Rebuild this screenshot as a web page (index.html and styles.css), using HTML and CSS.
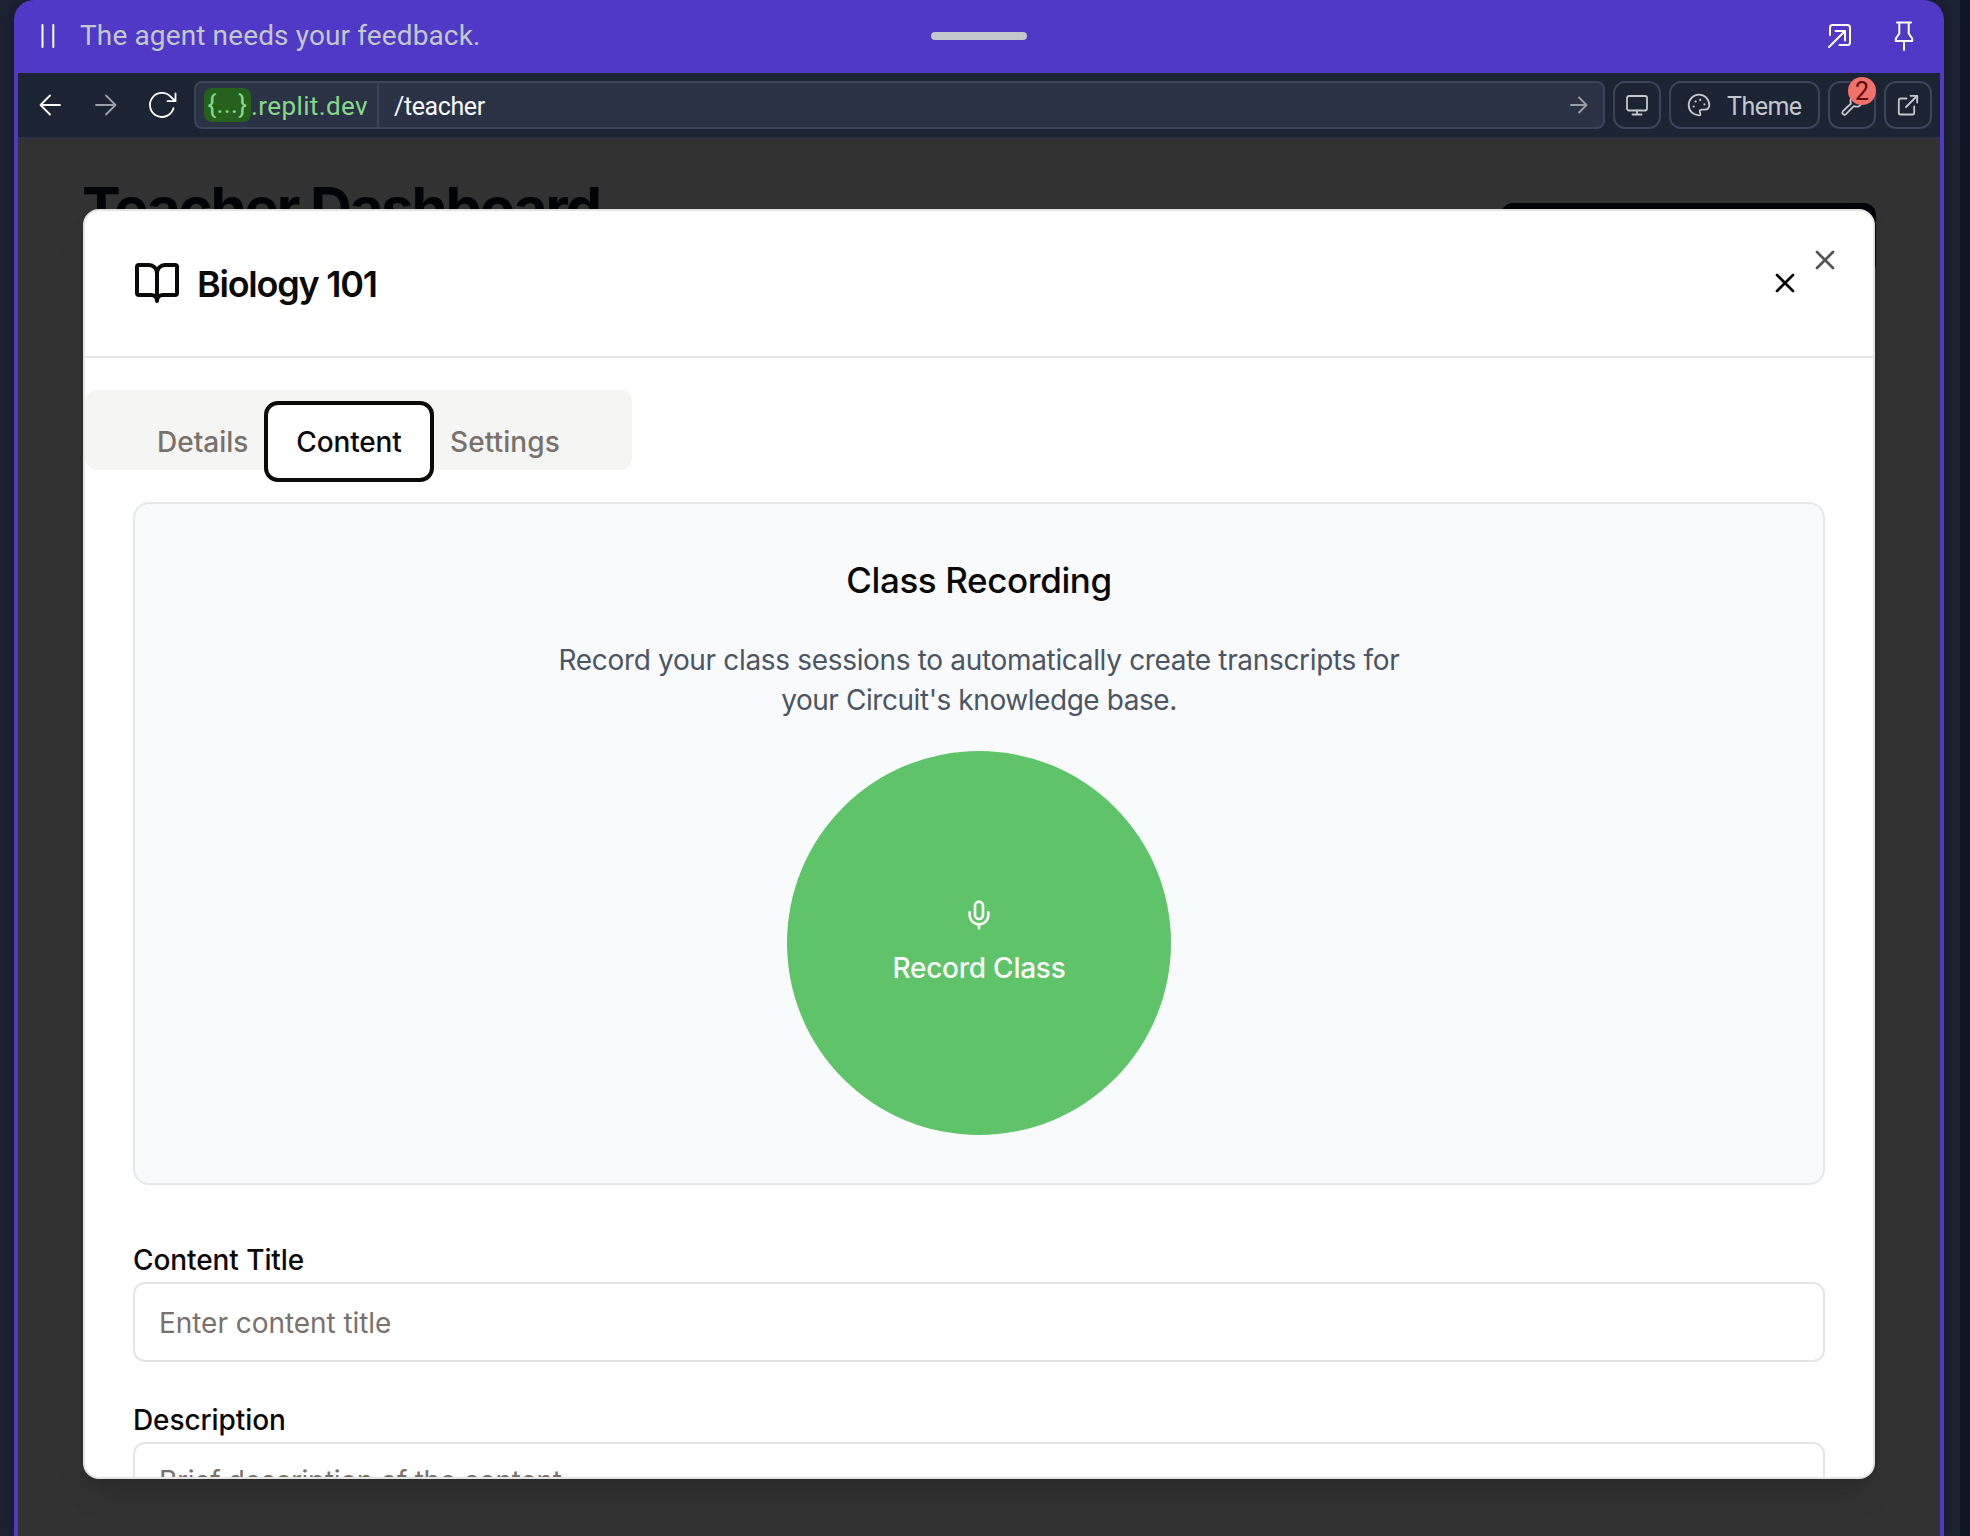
FILE: index.html
```html
<!DOCTYPE html>
<html lang="en">
<head>
<meta charset="utf-8">
<title>Teacher Dashboard</title>
<link rel="stylesheet" href="styles.css">
</head>
<body>
<div class="workspace">
  <div class="window">
    <header class="agent-bar">
      <svg class="pause" width="16" height="26" viewBox="0 0 16 26"><path d="M2.5 2v22M13.3 2v22"/></svg>
      <span class="agent-text">The agent needs your feedback.</span>
      <span class="grabber"></span>
      <div class="agent-actions">
        <svg width="28" height="32" viewBox="0 0 28 32"><path d="M4 15V7.5Q4 5 6.500 5H21.500Q24 5 24 7.500V22.500Q24 25 21.500 25H13.500M3 27L18.500 11.500M9.500 11H19V20.500"/></svg>
        <svg width="28" height="32" viewBox="0 0 28 32"><path d="M7 2.500H21M9.300 2.500V13.500L5.800 18.500V21H22.200V18.500L18.700 13.500V2.500M14 21V30"/></svg>
      </div>
    </header>

    <nav class="toolbar">
      <div class="nav-buttons">
        <svg class="icon back" width="28" height="28" viewBox="0 0 28 28"><path d="M24 14H4.500M14 4.500L4.500 14L14 23.500"/></svg>
        <svg class="icon forward" width="28" height="28" viewBox="0 0 28 28"><path d="M4 14H23.500M14 4.500L23.500 14L14 23.500"/></svg>
        <svg class="icon reload" width="32" height="32" viewBox="0 0 32 32"><path d="M27.500 19.200A12 12 0 1 1 24.500 7.500L29.200 12M29.500 4.500V12.200H21.500"/></svg>
      </div>
      <div class="address">
        <div class="host"><span class="chip">{...}</span><span class="domain">.replit.dev</span></div>
        <span class="path">/teacher</span>
        <svg class="icon go" width="20" height="20" viewBox="0 0 20 20"><path d="M2 10H17.500M10 2.500L17.500 10L10 17.500"/></svg>
      </div>
      <button class="tool"><svg class="icon" width="24" height="24" viewBox="0 0 24 24"><rect x="2" y="3" width="20" height="14.500" rx="2"/><path d="M12 17.500V21.500M7.500 21.500H16.500"/></svg></button>
      <button class="tool theme">
        <svg class="icon" width="24" height="24" viewBox="0 0 24 24"><path d="M12.500 22.300A10.300 10.300 0 1 1 22.300 12C22.300 15.500 20 16.600 17.500 16.600H14.500C12.700 16.600 12.300 18.200 13 19.500C13.700 21 13.500 22.300 12.500 22.300Z"/><path class="dots" d="M6.700 13.500h.01M8.600 8.500h.01M13.200 6.900h.01M17.400 11.300h.01"/></svg>
        <span>Theme</span>
      </button>
      <button class="tool wrench">
        <svg class="icon" width="24" height="24" viewBox="0 0 24 24"><path d="M17.700 2.500L14.500 6L18 9.500L21.500 6.500Q22.500 12 18.500 13.300Q16 14 13.800 13.200L6 21.200Q4.500 22.600 3 21.200Q1.700 19.700 3 18.200L11 10.500Q9.500 7 12 4.500Q14.500 2 17.700 2.500Z"/></svg>
        <span class="badge">2</span>
      </button>
      <button class="tool"><svg class="icon" width="24" height="24" viewBox="0 0 24 24"><path d="M10.500 5.500H4.500Q2.800 5.500 2.800 7.200V19.800Q2.800 21.500 4.500 21.500H16.500Q18.200 21.500 18.200 19.800V13.500M10 14L21 3M14.500 2.800H21.200V9.500"/></svg></button>
    </nav>

    <main class="screen">
      <div class="page-head">
        <h1>Teacher Dashboard</h1>
        <span class="page-button"></span>
      </div>

      <section class="modal">
        <div class="modal-head">
          <svg width="48" height="48" viewBox="0 0 24 24"><path d="M12 7v14M3 18a1 1 0 0 1-1-1V4a1 1 0 0 1 1-1h5a4 4 0 0 1 4 4 4 4 0 0 1 4-4h5a1 1 0 0 1 1 1v13a1 1 0 0 1-1 1h-6a3 3 0 0 0-3 3 3 3 0 0 0-3-3z"/></svg>
          <h2>Biology 101</h2>
          <svg class="close" width="32" height="32" viewBox="0 0 24 24"><path d="M18 6 6 18M6 6l12 12"/></svg>
        </div>
        <svg class="close-corner" width="32" height="32" viewBox="0 0 24 24"><path d="M18 6 6 18M6 6l12 12"/></svg>

        <div class="tabs">
          <span class="tab details">Details</span>
          <span class="tab active">Content</span>
          <span class="tab settings">Settings</span>
        </div>

        <div class="modal-body">
          <div class="recording">
            <h3>Class Recording</h3>
            <p><span class="line-one">Record your class sessions to automatically create transcripts for</span><br><span class="line-two">your Circuit's knowledge base.</span></p>
            <button class="record">
              <svg width="32" height="32" viewBox="0 0 24 24"><path d="M12 2a3 3 0 0 0-3 3v7a3 3 0 0 0 6 0V5a3 3 0 0 0-3-3ZM19 10v2a7 7 0 0 1-14 0v-2M12 19v3"/></svg>
              <span>Record Class</span>
            </button>
          </div>
          <div class="field">
            <div class="label">Content Title</div>
            <div class="input">Enter content title</div>
          </div>
          <div class="field">
            <div class="label description">Description</div>
            <div class="input textarea">Brief description of the content</div>
          </div>
        </div>
      </section>
    </main>
  </div>
</div>
</body>
</html>
```
FILE: styles.css
```css
* { box-sizing: border-box; }
body { margin: 0; background: #0e1525; font-family: Inter, "Liberation Sans", sans-serif; }
svg { display: block; flex: none; fill: none; stroke: currentColor; stroke-width: 2; stroke-linecap: round; stroke-linejoin: round; }
button { font: inherit; color: inherit; border: 0; padding: 0; margin: 0; }
h1, h2, h3, p { margin: 0; }

.workspace { width: 1960px; height: 1536px; padding-left: 14px; background: #1c2333; overflow: hidden; }
.window { width: 1930px; height: 1536px; display: flex; flex-direction: column; padding: 0 4px; background: #5039c6; border-radius: 20px 20px 0 0; box-shadow: 0 0 20px rgba(0, 0, 0, .35); }

.agent-bar { position: relative; flex: none; height: 73px; display: flex; align-items: center; padding: 0 22px 1px; color: #fff; }
.agent-text { margin-left: 24px; font: 28px/40px Roboto, sans-serif; letter-spacing: .13px; color: #c2c8cc; }
.grabber { position: absolute; left: 913px; top: 32px; width: 96px; height: 8px; border-radius: 4px; background: #c2c8cc; }
.agent-actions { margin-left: auto; display: flex; gap: 36px; }

.toolbar { flex: none; height: 66px; display: flex; align-items: center; gap: 8px; padding: 0 8px 0 18px; background: #1c2333; border-bottom: 2px solid #2b3245; color: #c2c8cc; font-family: Roboto, sans-serif; }
.nav-buttons { display: flex; align-items: center; gap: 28px; width: 150px; }
.reload { margin-left: -2px; }
.back, .reload { color: #fff; }
.forward { color: #9a9fa8; }
.icon { stroke-width: 1.800; }
.address { flex: 1; height: 48px; display: flex; align-items: center; border: 2px solid #3c445c; border-radius: 8px; background: #2b3245; padding-right: 14px; }
.host { height: 44px; width: 183px; display: flex; align-items: center; padding-left: 8px; border-right: 2px solid #3c445c; color: #86d986; font-size: 26px; }
.chip { width: 47px; height: 34px; line-height: 33px; text-align: center; border-radius: 8px; background: #26601d; letter-spacing: .4px; }
.domain { line-height: 36px; letter-spacing: .4px; padding-top: 1px; }
.path { margin-left: 15px; padding-top: 2px; font-size: 25px; letter-spacing: -.4px; color: #f5f9fc; }
.go { margin-left: auto; color: #9a9fa8; }
.tool { position: relative; flex: none; width: 48px; height: 48px; display: flex; align-items: center; justify-content: center; border: 2px solid #3c445c; border-radius: 12px; background: #1c2333; }
.theme { width: 151px; justify-content: flex-start; padding-left: 16px; gap: 16px; font-size: 25px; letter-spacing: -.5px; }
.theme span { padding-top: 2px; }
.dots { stroke-width: 2.200; }
.badge { position: absolute; left: 18px; top: -6px; width: 28px; height: 28px; border-radius: 50%; background: #f0706a; color: #5c0a08; font-size: 25px; line-height: 29px; text-align: center; }

.screen { position: relative; flex: 1; min-height: 0; overflow: hidden; background: #323232; padding: 39px 64px 0 64px; }
.page-head { display: flex; justify-content: space-between; }
.page-head h1 { font-size: 58px; line-height: 60px; font-weight: 700; letter-spacing: -2.150px; color: #020306; }
.page-button { width: 375px; height: 72px; margin-top: 25px; border-radius: 12px; background: #020306; }

.modal { position: absolute; left: 65px; top: 70px; width: 1792px; height: 1270px; overflow: hidden; background: #fff; border: 2px solid #e4e4e4; border-radius: 16px; color: #0c0a09; box-shadow: 0 20px 30px -6px rgba(0, 0, 0, .15), 0 8px 12px -8px rgba(0, 0, 0, .1); font-size: 28px; line-height: 40px; }
.modal-head { height: 147px; display: flex; align-items: center; gap: 16px; padding: 0 72px 1px 48px; border-bottom: 2px solid #e5e5e5; }
.modal-head h2 { font-size: 36px; font-weight: 600; letter-spacing: -1.250px; line-height: 48px; padding-top: 1px; }
.close { margin-left: auto; }
.close-corner { position: absolute; left: 1724px; top: 33px; opacity: .7; }

.tabs { display: flex; align-items: flex-start; width: 547px; height: 80px; margin-top: 32px; padding: 11px 0 0 56px; border-radius: 12px; background: #f5f5f4; color: #78716c; font-weight: 500; }
.tab { flex: none; height: 80px; padding: 21px 16px; }
.details { width: 123px; letter-spacing: 0; }
.active { width: 170px; padding: 17px 0; text-align: center; background: #fff; border: 4px solid #0c0a09; border-radius: 14px; color: #0c0a09; letter-spacing: -.150px; height: 81px; }
.settings { letter-spacing: .1px; }

.modal-body { padding: 32px 48px 0; }
.recording { height: 683px; display: flex; flex-direction: column; align-items: center; padding-top: 52px; border: 2px solid #e5e7eb; border-radius: 16px; background: #f9fafc; text-align: center; }
.recording h3 { font-size: 35px; line-height: 48px; font-weight: 500; letter-spacing: -.400px; }
.recording p { margin-top: 36px; color: #4b5563; }
.line-one { letter-spacing: -.330px; }
.line-two { letter-spacing: -.440px; }
.record { width: 384px; height: 384px; margin-top: 31px; padding-top: 1px; display: flex; flex-direction: column; align-items: center; justify-content: center; gap: 17px; border-radius: 50%; background: #5fc36a; color: #fafaf9; font-weight: 500; letter-spacing: -.250px; }

.field { margin-top: 38px; }
.recording + .field { margin-top: 55px; }
.label { font-weight: 500; letter-spacing: -.080px; }
.description { letter-spacing: -.1px; }
.input { height: 80px; margin-top: 2px; padding: 19px 22px 0 24px; border: 2px solid #e4e4e4; border-radius: 12px; color: #78716c; letter-spacing: -.050px; }
.textarea { height: 160px; padding-top: 17px; letter-spacing: -.300px; }
```
